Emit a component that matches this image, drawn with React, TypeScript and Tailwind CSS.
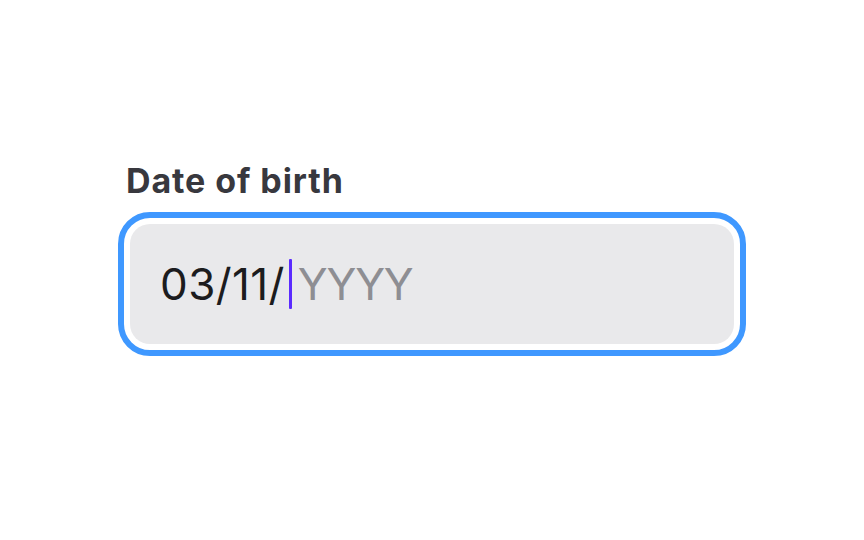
export default function App() {
  return (
    <div className="w-[864px] h-[540px] bg-white flex flex-col items-center pt-[161px]" style={{ fontFamily: 'Inter, "Noto Sans", sans-serif' }}>
      <div className="w-[628px]">
        <div className="pl-[8px] text-[34px] leading-[40px] font-bold text-[#38383e] tracking-[0.9px]">Date of birth</div>
        <div className="mt-[11px] border-[6px] border-[#3f98ff] rounded-[32px] p-[6px] bg-white">
          <div className="h-[120px] bg-[#e9e9eb] rounded-[20px] flex items-center pl-[30px]">
            <span className="text-[44px] leading-[50px] text-[#1c1c1e] tracking-[0.4px]">03/11/</span>
            <span className="w-[3px] h-[50px] bg-[#5b2bff] ml-[4px] mr-[6px] rounded-[1px]"></span>
            <span className="text-[44px] leading-[50px] text-[#8e8e93] tracking-[-1.2px]">YYYY</span>
          </div>
        </div>
      </div>
    </div>
  );
}
